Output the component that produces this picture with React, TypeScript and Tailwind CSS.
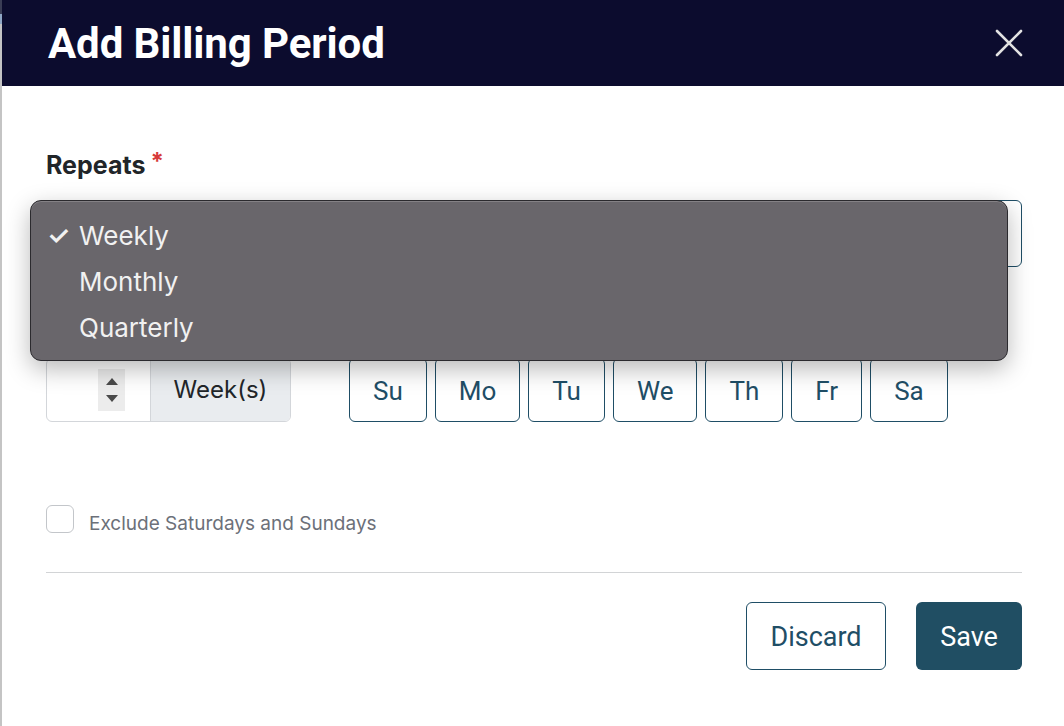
import { useState } from "react";

const days = ["Su", "Mo", "Tu", "We", "Th", "Fr", "Sa"];
const options = ["Weekly", "Monthly", "Quarterly"];

export default function App() {
  const [repeat, setRepeat] = useState("Weekly");
  const [exclude, setExclude] = useState(false);

  return (
    <div className="flex h-[726px] w-[1064px] overflow-hidden bg-white font-['Inter',sans-serif]">
      {/* browser edge */}
      <div className="flex w-[2px] flex-col bg-[#c4c4c4]">
        <div className="h-[14px] bg-[#3a3d55]" />
        <div className="h-[10px] bg-[#8fa6c4]" />
      </div>

      <div className="flex flex-1 flex-col">
        <div className="flex h-[86px] items-center justify-between bg-[#0c0c2e] pl-[46px] pr-[40px]">
          <h1 className="font-['Roboto',sans-serif] text-[42px] font-bold tracking-[-0.1px] text-white">
            Add Billing Period
          </h1>
          <button type="button" className="text-[#e2e2e2]">
            <svg width="30" height="30" viewBox="0 0 30 30" fill="none" stroke="currentColor" strokeWidth="2.6" strokeLinecap="round">
              <path d="M3 3L27 27M27 3L3 27" />
            </svg>
          </button>
        </div>

        <div className="flex flex-col pl-[44px] pr-[42px] pt-[64px]">
          <div className="flex items-start gap-[5px] text-[25px] font-bold leading-[30px] text-[#212529]">
            Repeats<span className="-mt-[3px] text-[24px] text-[#d63a3a]">*</span>
          </div>

          <div className="relative mt-[20px]">
            <div className="h-[67px] rounded-md border border-[#1f4e66] bg-white" />
            {/* native select popup */}
            <div className="absolute left-[-16px] right-[14px] top-0 z-10 flex flex-col rounded-[11px] border border-[#2b2a2e] bg-[#69666b] pb-[10px] pt-[11px] shadow-[0_8px_24px_rgba(0,0,0,0.28),inset_0_1px_0_rgba(255,255,255,0.18)]">
              {options.map((o) => (
                <button
                  key={o}
                  type="button"
                  onClick={() => setRepeat(o)}
                  className="flex h-[46px] items-center text-left text-[26px] text-[#f1f1f1]"
                >
                  <span className="w-[48px] pl-[16px] text-[26px] font-semibold">{repeat === o ? "✓" : ""}</span>
                  {o}
                </button>
              ))}
            </div>
          </div>

          <div className="mt-[91px] flex items-center gap-[58px]">
            <div className="flex h-[64px] w-[245px] overflow-hidden rounded-md border border-[#d3d6da]">
              <div className="flex w-[103px] items-center justify-end pr-[25px]">
                <div className="flex h-[42px] w-[27px] flex-col items-center justify-center gap-[10px] bg-[#ececec]">
                  <svg width="12" height="7" viewBox="0 0 12 7"><path d="M6 0L12 7H0Z" fill="#4a4a4a" /></svg>
                  <svg width="12" height="7" viewBox="0 0 12 7"><path d="M0 0H12L6 7Z" fill="#4a4a4a" /></svg>
                </div>
              </div>
              <div className="flex flex-1 items-center justify-center border-l border-[#d3d6da] bg-[#e9ecef] text-[24px] text-[#212529]">
                Week(s)
              </div>
            </div>

            <div className="flex gap-[8px]">
              {days.map((d) => (
                <button
                  key={d}
                  type="button"
                  className="flex h-[64px] items-center justify-center rounded-md border border-[#1f4e66] px-[23px] pt-[3px] font-['Roboto',sans-serif] text-[26px] text-[#1f4e66]"
                >
                  {d}
                </button>
              ))}
            </div>
          </div>

          <label className="mt-[78px] flex items-center gap-[15px]">
            <input
              type="checkbox"
              checked={exclude}
              onChange={(e) => setExclude(e.target.checked)}
              className="h-[28px] w-[28px] appearance-none rounded-md border border-[#c3c6ca] bg-white"
            />
            <span className="pt-[10px] text-[19px] text-[#6c7079]">Exclude Saturdays and Sundays</span>
          </label>

          <div className="mt-[33px] h-px bg-[#d2d4d6]" />

          <div className="mt-[29px] flex justify-end gap-[30px]">
            <button
              type="button"
              className="h-[68px] w-[140px] rounded-md border border-[#1f4e66] pt-[4px] font-['Roboto',sans-serif] text-[27px] text-[#1f4e66]"
            >
              Discard
            </button>
            <button
              type="button"
              className="h-[68px] w-[106px] rounded-md bg-[#204e63] pt-[4px] font-['Roboto',sans-serif] text-[27px] text-white"
            >
              Save
            </button>
          </div>
        </div>
      </div>
    </div>
  );
}
